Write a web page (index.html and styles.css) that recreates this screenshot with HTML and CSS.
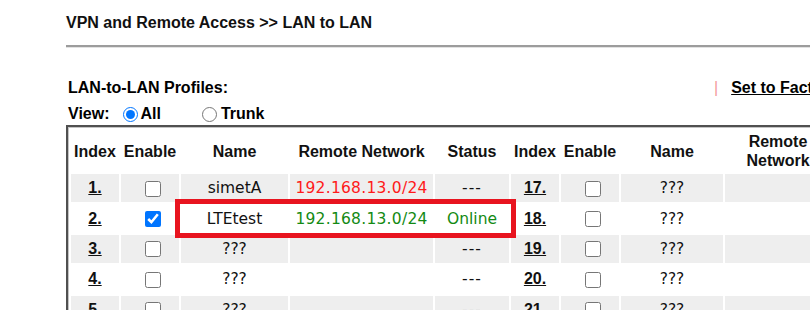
FILE: index.html
```html
<!DOCTYPE html>
<html lang="en">
<head>
<meta charset="utf-8">
<title>VPN and Remote Access &gt;&gt; LAN to LAN</title>
<link rel="stylesheet" href="styles.css">
</head>
<body>
<div class="page">
  <h1 class="title">VPN and Remote Access &gt;&gt; LAN to LAN</h1>
  <div class="rule"></div>
  <div class="section">
    <div class="profiles-row">
      <span class="label">LAN-to-LAN Profiles:</span>
      <span class="actions"><span class="pipe">|</span><a class="action-link" href="#">Set to Factory Default</a></span>
    </div>
    <div class="view-row">
      <span class="label">View:</span>
      <label class="radio-label first"><input type="radio" name="view" checked><span>All</span></label>
      <label class="radio-label second"><input type="radio" name="view"><span>Trunk</span></label>
    </div>
  </div>
  <div class="table-wrap">
    <table class="profiles">
      <colgroup>
        <col class="c-idx"><col class="c-en"><col class="c-name1"><col class="c-net1"><col class="c-stat">
        <col class="c-idx"><col class="c-en"><col class="c-name2"><col class="c-net2"><col class="c-stat">
      </colgroup>
      <thead>
        <tr>
          <th>Index</th><th>Enable</th><th>Name</th><th class="nowrap">Remote Network</th><th>Status</th>
          <th>Index</th><th>Enable</th><th>Name</th><th>Remote Network</th><th>Status</th>
        </tr>
      </thead>
      <tbody>
        <tr>
          <td><a class="idx" href="#">1.</a></td><td><input class="cb" type="checkbox"></td><td>simetA</td><td class="ip red">192.168.13.0/24</td><td class="dash">---</td>
          <td><a class="idx" href="#">17.</a></td><td><input class="cb" type="checkbox"></td><td>???</td><td></td><td class="dash">---</td>
        </tr>
        <tr>
          <td><a class="idx" href="#">2.</a></td><td><input class="cb" type="checkbox" checked></td><td>LTEtest</td><td class="ip green">192.168.13.0/24</td><td class="green">Online</td>
          <td><a class="idx" href="#">18.</a></td><td><input class="cb" type="checkbox"></td><td>???</td><td></td><td class="dash">---</td>
        </tr>
        <tr>
          <td><a class="idx" href="#">3.</a></td><td><input class="cb" type="checkbox"></td><td>???</td><td></td><td class="dash">---</td>
          <td><a class="idx" href="#">19.</a></td><td><input class="cb" type="checkbox"></td><td>???</td><td></td><td class="dash">---</td>
        </tr>
        <tr>
          <td><a class="idx" href="#">4.</a></td><td><input class="cb" type="checkbox"></td><td>???</td><td></td><td class="dash">---</td>
          <td><a class="idx" href="#">20.</a></td><td><input class="cb" type="checkbox"></td><td>???</td><td></td><td class="dash">---</td>
        </tr>
        <tr>
          <td><a class="idx" href="#">5.</a></td><td><input class="cb" type="checkbox"></td><td>???</td><td></td><td class="dash">---</td>
          <td><a class="idx" href="#">21.</a></td><td><input class="cb" type="checkbox"></td><td>???</td><td></td><td class="dash">---</td>
        </tr>
      </tbody>
    </table>
    <div class="highlight"></div>
  </div>
</div>
</body>
</html>
```

FILE: styles.css
```css
html, body {
  margin: 0;
  padding: 0;
  background: #ffffff;
  overflow: hidden;
}

body {
  font-family: "Liberation Sans", Arial, sans-serif;
  color: #000000;
}

.page {
  padding: 13px 0 0 66px;
  width: 900px;
}

.title {
  margin: 0;
  font-size: 16px;
  line-height: 20px;
  font-weight: 700;
  color: #111111;
}

.rule {
  margin-top: 12px;
  height: 0;
  border-top: 2px solid #9c9c9c;
  border-bottom: 1px solid #e2e2e2;
  width: 760px;
}

.section {
  padding-left: 2px;
  margin-top: 30px;
}

.label {
  font-weight: 700;
  font-size: 16px;
}

.profiles-row {
  display: flex;
  align-items: center;
  line-height: 20px;
  height: 20px;
}

.actions {
  margin-left: 486px;
  display: flex;
  align-items: center;
  white-space: nowrap;
}

.pipe {
  color: #f49a9a;
  font-weight: 400;
  font-size: 16px;
  margin-right: 13px;
}

.action-link {
  color: #000000;
  font-weight: 700;
  font-size: 16px;
  text-decoration: underline;
}

.view-row {
  display: flex;
  align-items: center;
  margin-top: 6px;
  line-height: 20px;
  height: 20px;
}

.radio-label {
  display: flex;
  align-items: center;
  font-weight: 700;
  font-size: 16px;
}

.radio-label input {
  width: 15px;
  height: 15px;
  margin: 1px 3px 0 0;
}

.radio-label.first {
  margin-left: 13px;
}

.radio-label.second {
  margin-left: 41px;
}

.radio-label.second input {
  margin-right: 4px;
}

.table-wrap {
  position: relative;
  margin-top: 1px;
}

.profiles {
  border-collapse: separate;
  border-spacing: 2px;
  border: 2px solid #505050;
  padding: 1px;
  box-shadow: inset 0 0 0 1px #c4c4c4;
  table-layout: fixed;
  width: 846px;
}

.c-idx { width: 48px; }
.c-en { width: 58px; }
.c-name1 { width: 107px; }
.c-net1 { width: 143px; }
.c-stat { width: 74px; }
.c-name2 { width: 102px; }
.c-net2 { width: 106px; }

.profiles th {
  font-size: 16px;
  font-weight: 700;
  line-height: 19px;
  padding: 2px 0;
  text-align: center;
  vertical-align: middle;
  color: #111111;
  background: #ffffff;
}

.profiles th.nowrap {
  white-space: nowrap;
}

.profiles td {
  height: 28.4px;
  padding: 0;
  text-align: center;
  vertical-align: middle;
  font-family: "DejaVu Sans", Verdana, sans-serif;
  font-size: 15.5px;
  color: #111111;
  white-space: nowrap;
}

.profiles tbody tr:nth-child(odd) td {
  background: #eeeeee;
}

.profiles tbody tr:nth-child(even) td {
  background: #ffffff;
}

.idx {
  font-family: "Liberation Sans", Arial, sans-serif;
  font-weight: 700;
  font-size: 16px;
  color: #111111;
  text-decoration: underline;
}

.cb {
  width: 16px;
  height: 16px;
  margin: 0 0 0 6px;
  vertical-align: middle;
}

.ip {
  letter-spacing: 0.25px;
}

.profiles td.dash {
  letter-spacing: 1px;
}

.red {
  color: #ff1a1a !important;
}

.green {
  color: #138a13 !important;
}

.highlight {
  position: absolute;
  left: 109px;
  top: 74px;
  width: 341px;
  height: 39px;
  box-sizing: border-box;
  border: 5px solid #e8141f;
  pointer-events: none;
}
```
